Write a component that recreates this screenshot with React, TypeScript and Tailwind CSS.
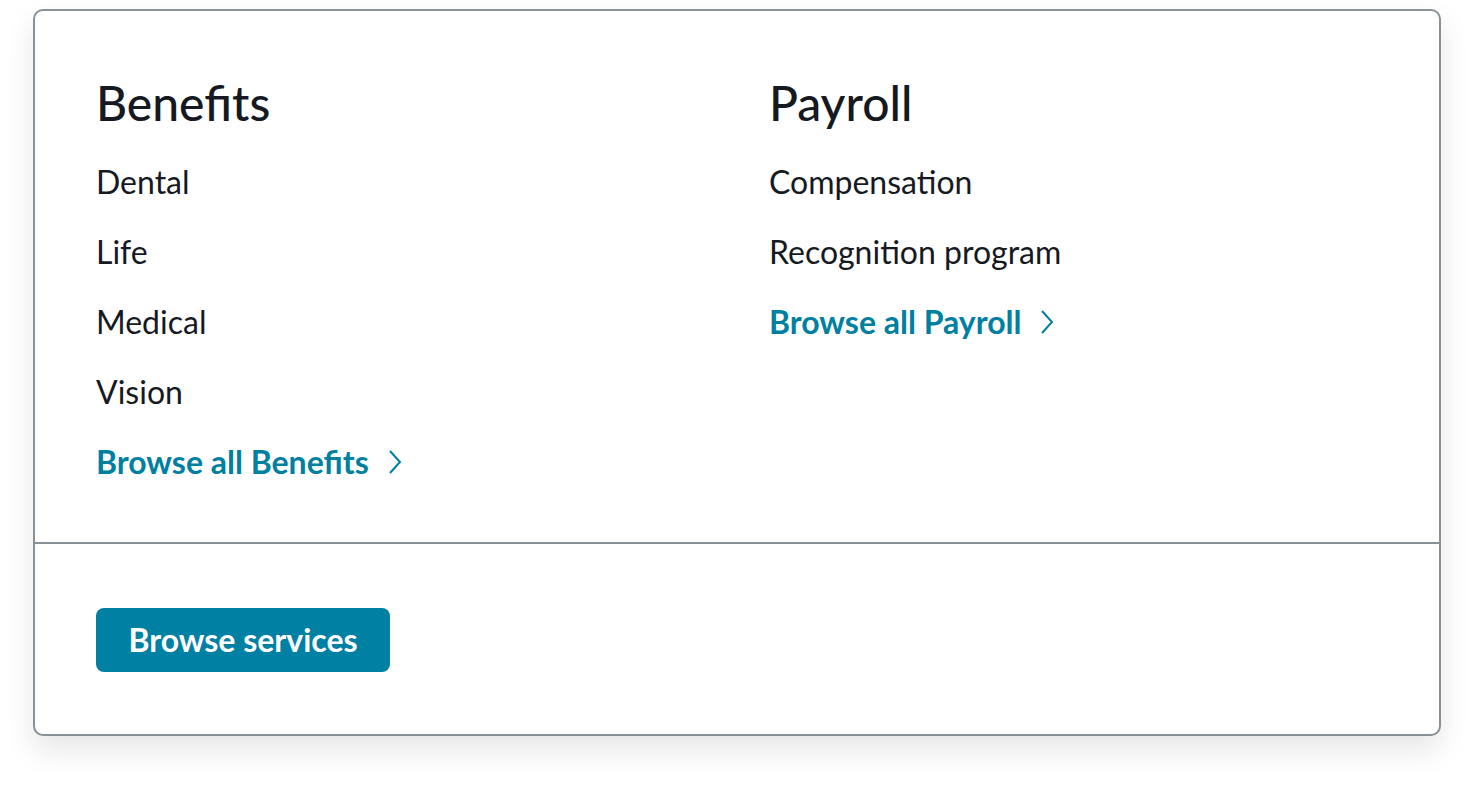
const benefits = ['Dental', 'Life', 'Medical', 'Vision'];
const payroll = ['Compensation', 'Recognition program'];

function Chevron() {
  return (
    <svg width="16" height="28" viewBox="0 0 16 28" fill="none" className="ml-[18px]">
      <polyline points="3,3 13,14 3,25" stroke="currentColor" strokeWidth="2" strokeLinejoin="miter" />
    </svg>
  );
}

function Column({ title, items, link }: { title: string; items: string[]; link: string }) {
  return (
    <div className="flex flex-col">
      <h2 className="text-[48px] leading-[58px] font-medium text-[#16191f] mb-[26px]">{title}</h2>
      <ul className="flex flex-col gap-[22px]">
        {items.map((item) => (
          <li key={item} className="text-[32px] leading-[48px] text-[#16191f]">
            {item}
          </li>
        ))}
        <li>
          <a href="#" className="inline-flex items-center text-[32px] leading-[48px] font-bold text-[#0080a1]">
            {link}
            <Chevron />
          </a>
        </li>
      </ul>
    </div>
  );
}

export default function App() {
  return (
    <div className="min-h-screen bg-white pt-[9px] px-[33px]" style={{ fontFamily: 'Lato, "Open Sans", sans-serif' }}>
      <div className="border-2 border-[#879196] rounded-[10px] bg-white shadow-[0_14px_30px_rgba(0,0,0,0.10)]">
        <div className="grid grid-cols-[641px_1fr] gap-8 pl-[61px] pr-[62px] pt-[63px] pb-[56px]">
          <Column title="Benefits" items={benefits} link="Browse all Benefits" />
          <Column title="Payroll" items={payroll} link="Browse all Payroll" />
        </div>
        <div className="border-t-2 border-[#879196] px-[61px] pt-[64px] pb-[62px]">
          <button className="h-16 w-[294px] rounded-[8px] bg-[#0080a3] text-white text-[32px] font-bold leading-none">
            Browse services
          </button>
        </div>
      </div>
    </div>
  );
}
